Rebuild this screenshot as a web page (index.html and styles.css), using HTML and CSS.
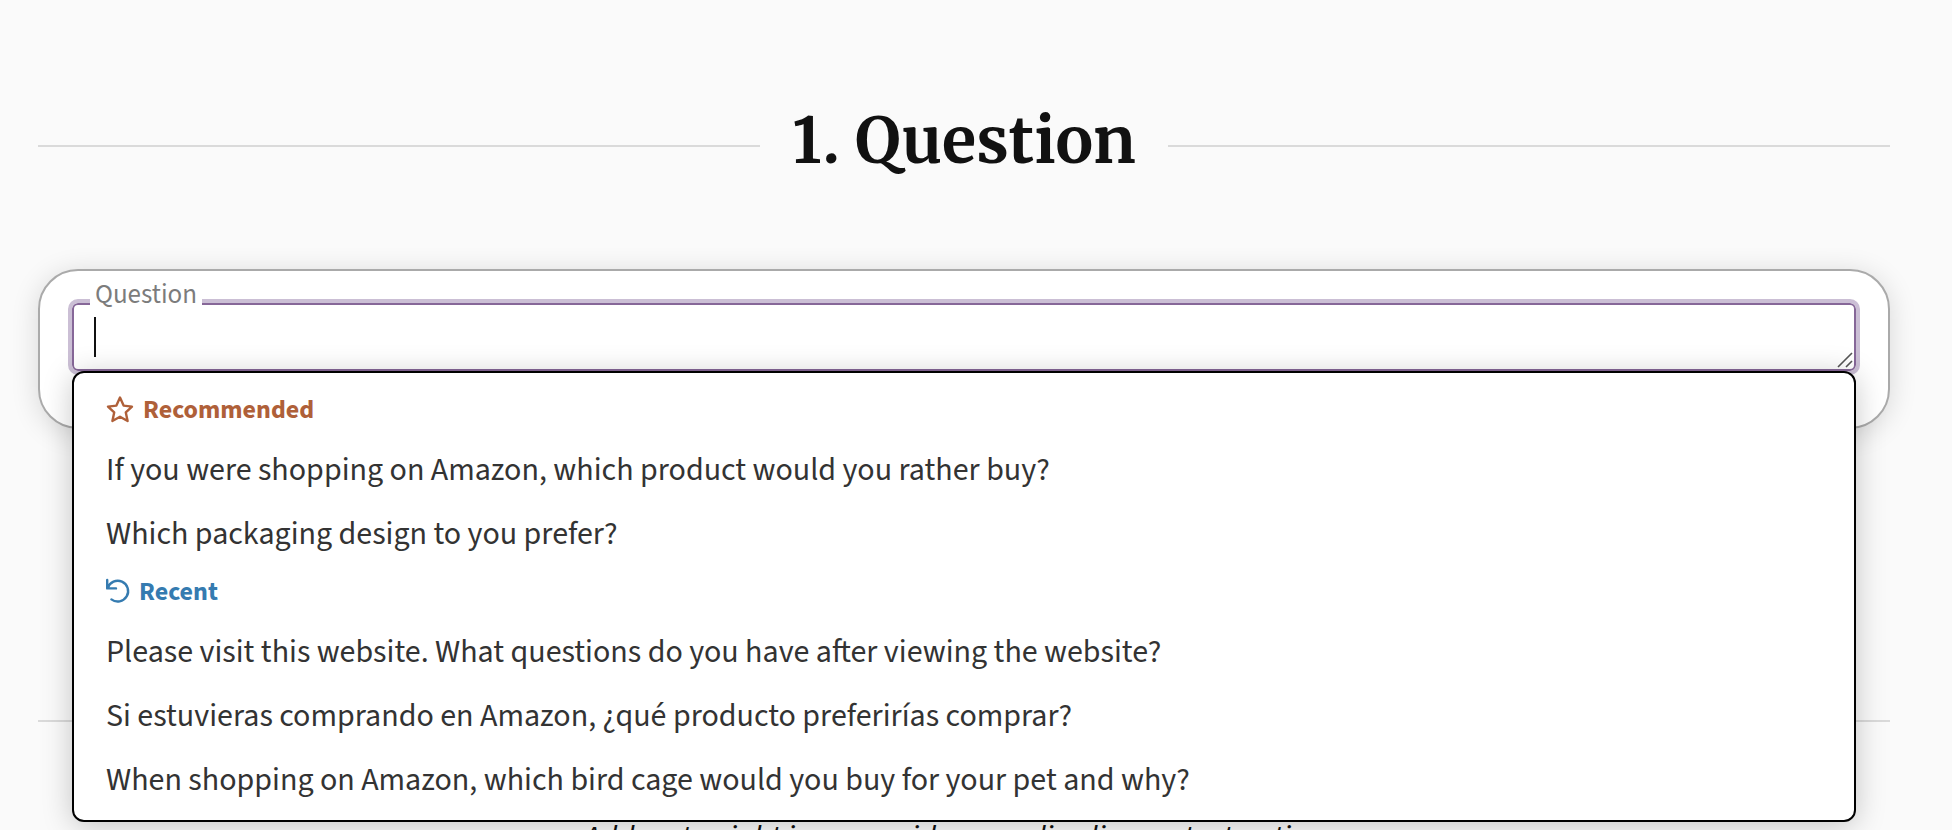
FILE: index.html
```html
<!DOCTYPE html>
<html lang="en">
<head>
<meta charset="utf-8">
<title>Question</title>
<link rel="stylesheet" href="styles.css">
</head>
<body>
<main class="page">
  <h1 class="section-title">1. Question</h1>
  <section class="card">
    <div class="field">
      <label class="field-label" for="question">Question</label>
      <textarea class="field-input" id="question" rows="1"></textarea>
      <span class="caret"></span>
      <svg class="grip" viewBox="0 0 16 16" aria-hidden="true"><path d="M1 15 15 1M9 15l6-6"/></svg>
      <div class="menu">
        <h2 class="menu-heading recommended">
          <svg class="star" viewBox="0 0 28 28" aria-hidden="true"><path d="M14 1.6 17.6 9.6 26 10.6 19.8 16.4 21.6 25 14 20.8 6.4 25 8.2 16.4 2 10.6 10.4 9.6Z"/></svg>
          Recommended
        </h2>
        <button class="menu-item" type="button">If you were shopping on Amazon, which product would you rather buy?</button>
        <button class="menu-item" type="button">Which packaging design to you prefer?</button>
        <h2 class="menu-heading recent">
          <svg class="undo" viewBox="0 0 24 24" aria-hidden="true"><path d="M1.2 1V9.4H10M1.8 9A10.4 10.4 0 1 1 5.4 20.4"/></svg>
          Recent
        </h2>
        <button class="menu-item" type="button">Please visit this website. What questions do you have after viewing the website?</button>
        <button class="menu-item" type="button">Si estuvieras comprando en Amazon, ¿qué producto preferirías comprar?</button>
        <button class="menu-item" type="button">When shopping on Amazon, which bird cage would you buy for your pet and why?</button>
      </div>
    </div>
  </section>
  <hr class="divider">
  <p class="hint">Add up to eight images, videos, audio clips, or text options.</p>
</main>
</body>
</html>
```
FILE: styles.css
```css
* {
  box-sizing: border-box;
}

html {
  height: 100%;
  overflow: hidden;
}

body {
  margin: 0;
  background: #fafafa;
  color: #111;
  font-family: "Source Sans Pro", "Source Sans 3", "Noto Sans CJK SC", sans-serif;
}

.page {
  padding: 101px 62px 0 38px;
}

.section-title {
  display: flex;
  align-items: center;
  gap: 32px;
  margin: 0;
  font: bold 63px/80px "Merriweather", "Liberation Serif", serif;
}

.section-title::before,
.section-title::after {
  content: "";
  flex: 1;
  height: 2px;
  margin-top: 10px;
  background: #dadada;
}

.card {
  margin-top: 88px;
  height: 160px;
  padding: 32px;
  border: 2px solid #aaa;
  border-radius: 40px;
  background: #fff;
  box-shadow: 0 4px 28px rgba(0, 0, 0, 0.14);
}

.field {
  position: relative;
}

.field-label {
  position: absolute;
  left: 18px;
  top: -24px;
  padding: 0 5px;
  background: #fff;
  color: #7c7c7c;
  font-size: 27px;
  line-height: 32px;
}

.field-input {
  display: block;
  width: 100%;
  height: 68px;
  padding: 12px 22px;
  border: 2px solid #866798;
  border-radius: 6px;
  outline: 4px solid #cbbfd5;
  resize: none;
  font: inherit;
  font-size: 32px;
  line-height: 40px;
}

.caret {
  position: absolute;
  left: 22px;
  top: 14px;
  width: 2px;
  height: 40px;
  background: #111;
}

.grip {
  position: absolute;
  right: 3px;
  top: 49px;
  width: 16px;
  height: 16px;
  fill: none;
  stroke: #555;
  stroke-width: 1.6;
}

.menu {
  position: absolute;
  inset: 68px 0 auto;
  padding: 11px 0 8px;
  border: 2px solid #000;
  border-radius: 12px;
  background: #fff;
  box-shadow: 0 4px 30px rgba(0, 0, 0, 0.22);
}

.menu-heading {
  display: flex;
  align-items: center;
  gap: 9px;
  height: 54px;
  margin: 0;
  padding: 0 32px 2px;
  font-size: 26px;
  font-weight: 700;
  line-height: 32px;
}

.menu-heading svg {
  fill: none;
  stroke: currentColor;
  stroke-width: 2.4;
  stroke-linejoin: round;
  stroke-linecap: round;
}

.star {
  width: 28px;
  height: 28px;
}

.undo {
  width: 24px;
  height: 24px;
  margin-bottom: 2px;
  overflow: visible;
}

.recommended {
  color: #af6039;
}

.recent {
  color: #357bb0;
}

.menu-item {
  display: block;
  width: 100%;
  height: 64px;
  padding: 0 32px;
  border: 0;
  background: none;
  color: #333;
  font: inherit;
  font-size: 32px;
  line-height: 40px;
  text-align: left;
}

.divider {
  height: 2px;
  margin: 291px 0 0;
  border: 0;
  background: #dadada;
}

.hint {
  margin: 96px 0 0;
  color: #111;
  font-size: 32px;
  line-height: 40px;
  font-style: italic;
  text-align: center;
}
```
